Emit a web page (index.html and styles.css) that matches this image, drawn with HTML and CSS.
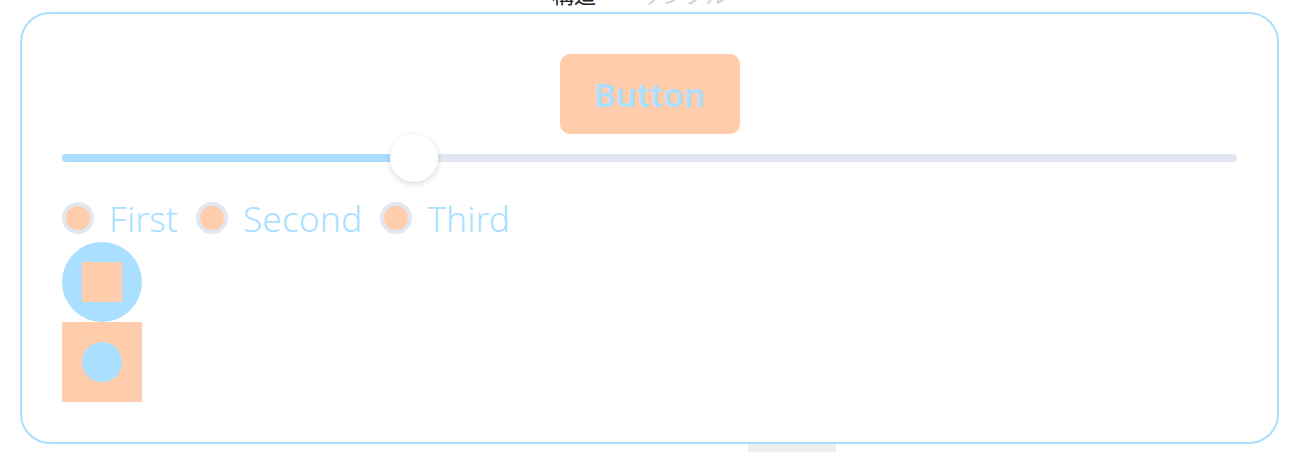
FILE: index.html
```html
<!DOCTYPE html>
<html lang="ja">
<head>
    <meta charset="UTF-8">
    <meta name="viewport" content="width=device-width, initial-scale=1.0">
    <title>Controls</title>
    <link rel="stylesheet" href="styles.css">
</head>
<body>
<div class="page-title"><span>構造</span><span class="muted">サンプル</span></div>
<div class="card">
    <div class="button-row">
        <button class="btn">Button</button>
    </div>
    <div class="slider">
        <div class="track">
            <div class="fill" style="width: 352px;"></div>
            <div class="thumb" style="left: 328px;"></div>
        </div>
    </div>
    <div class="radio-group">
        <label class="radio"><span class="dot"></span>First</label>
        <label class="radio"><span class="dot"></span>Second</label>
        <label class="radio"><span class="dot"></span>Third</label>
    </div>
    <div class="shapes">
        <div class="circle-box"><div class="inner-square"></div></div>
        <div class="square-box"><div class="inner-circle"></div></div>
    </div>
</div>
<div class="scroll-tab"></div>
</body>
</html>
```

FILE: styles.css
```css
body {
    margin: 0;
    background-color: #fff;
    font-family: "Noto Sans", "Noto Sans CJK JP", sans-serif;
    overflow: hidden;
}

/* only the bottom of the heading is still on screen */
.page-title {
    height: 12px;
    margin-left: 552px;
    font-family: "Noto Sans CJK JP", sans-serif;
    font-size: 22px;
    line-height: 22px;
    color: #222;
    overflow: hidden;
    display: flex;
    align-items: flex-end;
    gap: 44px;
}

.page-title span {
    margin-bottom: 8px;
}

.page-title .muted {
    color: #d0d0d0;
}

.card {
    margin: 0 19px 0 20px;
    border: 2px solid #aadfff;
    border-radius: 30px;
    padding: 40px;
    display: flex;
    flex-direction: column;
}

.button-row {
    display: flex;
    justify-content: center;
}

.btn {
    width: 180px;
    height: 80px;
    border: none;
    border-radius: 10px;
    background-color: #ffcdac;
    color: #aadfff;
    font-family: "Noto Sans", sans-serif;
    font-size: 33px;
    font-weight: 600;
    padding: 0;
    cursor: pointer;
}

.slider {
    height: 48px;
    display: flex;
    align-items: center;
}

.track {
    position: relative;
    flex: 1;
    height: 8px;
    border-radius: 4px;
    background-color: #e1e7f0;
}

.fill {
    height: 100%;
    border-radius: 4px;
    background-color: #aadfff;
}

.thumb {
    position: absolute;
    top: -20px;
    width: 48px;
    height: 48px;
    border-radius: 50%;
    background-color: #fff;
    box-shadow: 0 2px 6px rgba(0, 0, 0, 0.15);
}

.radio-group {
    margin-top: 16px;
    height: 40px;
    display: flex;
    align-items: center;
    gap: 18px;
}

.radio {
    display: flex;
    align-items: center;
    gap: 15px;
    font-size: 35.5px;
    font-weight: 300;
    color: #aadfff;
}

.dot {
    width: 24px;
    height: 24px;
    border: 4px solid #e1e7f0;
    border-radius: 50%;
    background-color: #ffcdac;
}

.shapes {
    margin-top: 4px;
    display: flex;
    flex-direction: column;
}

.circle-box,
.square-box {
    width: 80px;
    height: 80px;
    display: flex;
    align-items: center;
    justify-content: center;
}

.circle-box {
    border-radius: 50%;
    background-color: #aadfff;
}

.square-box {
    background-color: #ffcdac;
}

.inner-square {
    width: 40px;
    height: 40px;
    background-color: #ffcdac;
}

.inner-circle {
    width: 40px;
    height: 40px;
    border-radius: 50%;
    background-color: #aadfff;
}

.scroll-tab {
    margin-left: 748px;
    width: 88px;
    height: 10px;
    background-color: #eeeeee;
}
```
